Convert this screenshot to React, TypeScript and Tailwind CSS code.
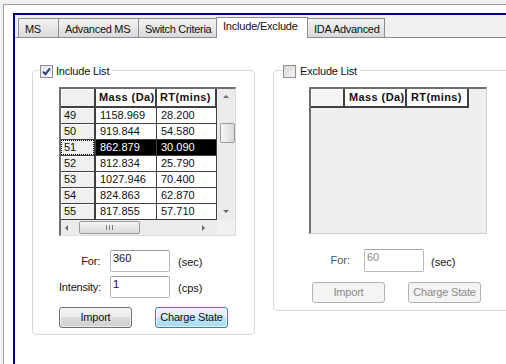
import React from "react";

const rows = [
  ["49", "1158.969", "28.200"],
  ["50", "919.844", "54.580"],
  ["51", "862.879", "30.090"],
  ["52", "812.834", "25.790"],
  ["53", "1027.946", "70.400"],
  ["54", "824.863", "62.870"],
  ["55", "817.855", "57.710"],
];

const tabs = [
  { label: "MS", w: "w-[41px]" },
  { label: "Advanced MS", w: "w-[81px]" },
  { label: "Switch Criteria", w: "w-[79px]" },
  { label: "Include/Exclude", w: "w-[92px]", active: true },
  { label: "IDA Advanced", w: "w-[78px]" },
];

function Arrow({ dir }: { dir: "up" | "down" | "left" | "right" }) {
  const vertical = dir === "up" || dir === "down";
  const pts = {
    up: "0,3 6,3 3,0",
    down: "0,0 6,0 3,3",
    left: "3,0 3,6 0,3",
    right: "0,0 0,6 3,3",
  }[dir];
  return (
    <svg width={vertical ? 6 : 3} height={vertical ? 3 : 6} viewBox={vertical ? "0 0 6 3" : "0 0 3 6"}>
      <polygon points={pts} fill="#6a6a6a" />
    </svg>
  );
}

function CheckBox({ checked }: { checked?: boolean }) {
  return (
    <span
      className={`w-[13px] h-[13px] border border-[#8f8f8f] flex items-center justify-center ${
        checked ? "bg-linear-to-br from-[#dfe6ee] to-[#fafcfe]" : "bg-linear-to-br from-[#d6d6d6] to-[#f8f8f8]"
      }`}
    >
      {checked && (
        <svg width="9" height="9" viewBox="0 0 9 9">
          <path d="M1 4.6 L3.4 7.2 L8 1.4" fill="none" stroke="#2b3f78" strokeWidth="1.9" />
        </svg>
      )}
    </span>
  );
}

function Button({ label, variant = "normal" }: { label: string; variant?: "normal" | "hot" | "disabled" }) {
  const cls =
    variant === "hot"
      ? "border-[#3c7fb1] bg-[linear-gradient(to_bottom,#eaf6fd_0%,#d9f0fc_50%,#bee6fd_50%,#a7d9f5_100%)] shadow-[inset_0_0_0_1px_rgba(255,255,255,0.7)] text-[#111]"
      : variant === "disabled"
      ? "border-[#adb2b5] bg-[#f4f4f4] text-[#8a8a8a]"
      : "border-[#707070] bg-[linear-gradient(to_bottom,#f2f2f2_0%,#ebebeb_50%,#dddddd_50%,#cfcfcf_100%)] shadow-[inset_0_0_0_1px_rgba(255,255,255,0.6)] text-[#111]";
  return (
    <div className={`w-[73px] h-[21px] border rounded-[3px] flex items-center justify-center text-[11px] tracking-[-0.2px] ${cls}`}>
      {label}
    </div>
  );
}

function Field({ label, value, unit, labelW, gap }: { label: string; value: string; unit: string; labelW: string; gap: string }) {
  return (
    <div className="flex items-center h-[22px]">
      <div className={`${labelW} text-right text-[11px] tracking-[-0.2px]`}>{label}</div>
      <div
        className={`${gap} w-[60px] h-[22px] border border-[#b8b8b8] border-t-[#9c9c9c] rounded-[2px] bg-white pl-[2px] text-[11px] leading-[13px] pt-[1px]`}
      >
        {value}
      </div>
      <div className="ml-[8px] pt-[3px] text-[11px]">{unit}</div>
    </div>
  );
}

function IncludeGrid() {
  return (
    <div className="w-[177px] h-[149px] flex border-t-2 border-l-2 border-[#6e6e6e] border-r border-b border-r-[#dcdcdc] border-b-[#dcdcdc] bg-white">
      <div className="w-[156px] flex flex-col">
        <div className="flex h-[19px] shrink-0">
          <div className="w-[35px] bg-[#f0f0f0] border-r-2 border-b-2 border-[#404040] shadow-[inset_1px_1px_0_#fff]" />
          <div className="w-[61px] bg-white border-r-2 border-b-2 border-[#404040] font-bold text-[11px] tracking-[0.4px] pl-[3px] flex items-center whitespace-nowrap">
            Mass (Da)
          </div>
          <div className="w-[60px] bg-white border-r-2 border-b-2 border-[#404040] font-bold text-[11px] tracking-[0.4px] pl-[3px] flex items-center whitespace-nowrap">
            RT(mins)
          </div>
        </div>
        <div className="flex-1 overflow-hidden">
          {rows.map(([n, mass, rt]) => {
            const sel = n === "51";
            return (
              <div key={n} className="flex h-[16px] text-[11px] leading-[15px]">
                <div className="w-[35px] bg-[#f0f0f0] border-r-2 border-b border-[#404040] shadow-[inset_1px_1px_0_#fff]">
                  <div className={`h-full pl-[2px] ${sel ? "border border-dotted border-black leading-[13px]" : "pl-[3px]"}`}>{n}</div>
                </div>
                <div className={`w-[61px] border-r border-b border-[#404040] pl-[4px] ${sel ? "bg-black text-white" : "bg-white"}`}>{mass}</div>
                <div className={`w-[60px] border-r border-b border-[#404040] pl-[4px] ${sel ? "bg-black text-white" : "bg-white"}`}>{rt}</div>
              </div>
            );
          })}
        </div>
        <div className="h-[15px] shrink-0 bg-[#ebebeb] flex items-center">
          <div className="w-[11px] flex justify-center">
            <Arrow dir="left" />
          </div>
          <div className="ml-[7px] w-[61px] h-[13px] rounded-[2px] border border-[#9a9a9a] bg-linear-to-b from-[#f6f6f6] to-[#d9d9d9] flex items-center justify-center gap-[2px]">
            <span className="w-px h-[5px] bg-[#7a7a7a]" />
            <span className="w-px h-[5px] bg-[#7a7a7a]" />
            <span className="w-px h-[5px] bg-[#7a7a7a]" />
          </div>
          <div className="flex-1" />
          <div className="w-[14px] mr-[7px] flex justify-center">
            <Arrow dir="right" />
          </div>
        </div>
      </div>
      <div className="w-[18px] flex flex-col">
        <div className="flex-1 flex flex-col bg-[#ebebeb]">
          <div className="h-[14px] flex items-center justify-center">
            <Arrow dir="up" />
          </div>
          <div className="mt-[20px] ml-[3px] w-[15px] h-[20px] rounded-[2px] border border-[#9a9a9a] bg-linear-to-r from-[#f6f6f6] to-[#d9d9d9]" />
          <div className="flex-1" />
          <div className="h-[17px] flex items-center justify-center">
            <Arrow dir="down" />
          </div>
        </div>
        <div className="h-[15px] bg-[#f0f0f0]" />
      </div>
    </div>
  );
}

function ExcludeGrid() {
  return (
    <div className="w-[178px] h-[147px] flex flex-col border-t-2 border-l-2 border-[#6e6e6e] border-r border-b border-r-[#d0d0d0] border-b-[#d0d0d0] bg-[#efefef]">
      <div className="flex h-[19px]">
        <div className="w-[34px] bg-[#f4f4f4] border-r-2 border-b-2 border-[#404040] shadow-[inset_1px_1px_0_#fff]" />
        <div className="w-[62px] bg-white border-r-2 border-b-2 border-[#404040] font-bold text-[11px] tracking-[0.4px] pl-[4px] flex items-center whitespace-nowrap">
          Mass (Da)
        </div>
        <div className="w-[62px] bg-white border-r-2 border-b-2 border-[#404040] font-bold text-[11px] tracking-[0.4px] pl-[4px] flex items-center whitespace-nowrap">
          RT(mins)
        </div>
      </div>
    </div>
  );
}

export default function App() {
  return (
    <div className="w-[506px] h-[364px] overflow-hidden bg-[#f0f0f0] flex flex-col font-['Liberation_Sans',Arial,sans-serif] text-[#111]">
      <div className="h-[4px] shrink-0" />
      <div className="flex-1 flex ml-[3px] border-t border-l border-[#a0a0a0] bg-white pt-[8px] pl-[9px]">
        <div className="flex-1 flex flex-col border-t-2 border-l-2 border-[#000080] bg-[#f0f0f0]">
          <div className="h-[23px] shrink-0 pl-[3px] flex items-end border-b border-[#898c95]">
            {tabs.map((t) =>
              t.active ? (
                <div
                  key={t.label}
                  className={`${t.w} h-[21px] -mb-px -ml-px relative z-10 bg-white border border-b-0 border-[#898c95] pl-[6px] pt-[2px] text-[11px] tracking-[-0.2px] leading-[13px] whitespace-nowrap`}
                >
                  {t.label}
                </div>
              ) : (
                <div
                  key={t.label}
                  className={`${t.w} h-[19px] -ml-px first:ml-0 border border-b-0 border-[#898c95] bg-linear-to-b from-[#f4f4f4] to-[#dadada] pl-[6px] pt-[4px] text-[11px] tracking-[-0.3px] leading-[13px] whitespace-nowrap overflow-hidden`}
                >
                  {t.label}
                </div>
              )
            )}
          </div>
          <div className="flex-1 bg-white flex items-start gap-[18px] pl-[17px] pt-[32px]">
            <div className="relative shrink-0 w-[223px] h-[265px] border border-[#d5d9dd] rounded-[4px] pl-[26px] pt-[16px]">
              <div className="absolute left-[6px] -top-[8px] flex items-center gap-[3px] bg-white pl-[1px] pr-[3px] text-[11px] tracking-[-0.2px]">
                <CheckBox checked />
                <span>Include List</span>
              </div>
              <IncludeGrid />
              <div className="mt-[14px]">
                <Field label="For:" value="360" unit="(sec)" labelW="w-[41px]" gap="ml-[10px]" />
                <div className="mt-[4px]">
                  <Field label="Intensity:" value="1" unit="(cps)" labelW="w-[41px]" gap="ml-[10px]" />
                </div>
              </div>
              <div className="mt-[9px] flex gap-[23px]">
                <Button label="Import" />
                <Button label="Charge State" variant="hot" />
              </div>
            </div>
            <div className="relative shrink-0 w-[250px] h-[241px] border border-[#d5d9dd] rounded-[4px] pl-[35px] pt-[16px]">
              <div className="absolute left-[8px] -top-[8px] flex items-center gap-[4px] bg-white pl-[1px] pr-[3px] text-[11px] tracking-[-0.2px]">
                <CheckBox />
                <span>Exclude List</span>
              </div>
              <ExcludeGrid />
              <div className="mt-[15px]">
                <div className="flex items-center h-[23px]">
                  <div className="w-[41px] text-right text-[11px] text-[#555]">For:</div>
                  <div className="ml-[14px] w-[60px] h-[23px] border border-[#b8b8b8] border-t-[#a6a6a6] rounded-[2px] bg-white pl-[2px] text-[11px] leading-[13px] pt-[1px] text-[#8a8a8a]">
                    60
                  </div>
                  <div className="ml-[7px] pt-[3px] text-[11px]">(sec)</div>
                </div>
              </div>
              <div className="mt-[10px] ml-[3px] flex gap-[23px]">
                <Button label="Import" variant="disabled" />
                <Button label="Charge State" variant="disabled" />
              </div>
            </div>
          </div>
        </div>
      </div>
    </div>
  );
}
